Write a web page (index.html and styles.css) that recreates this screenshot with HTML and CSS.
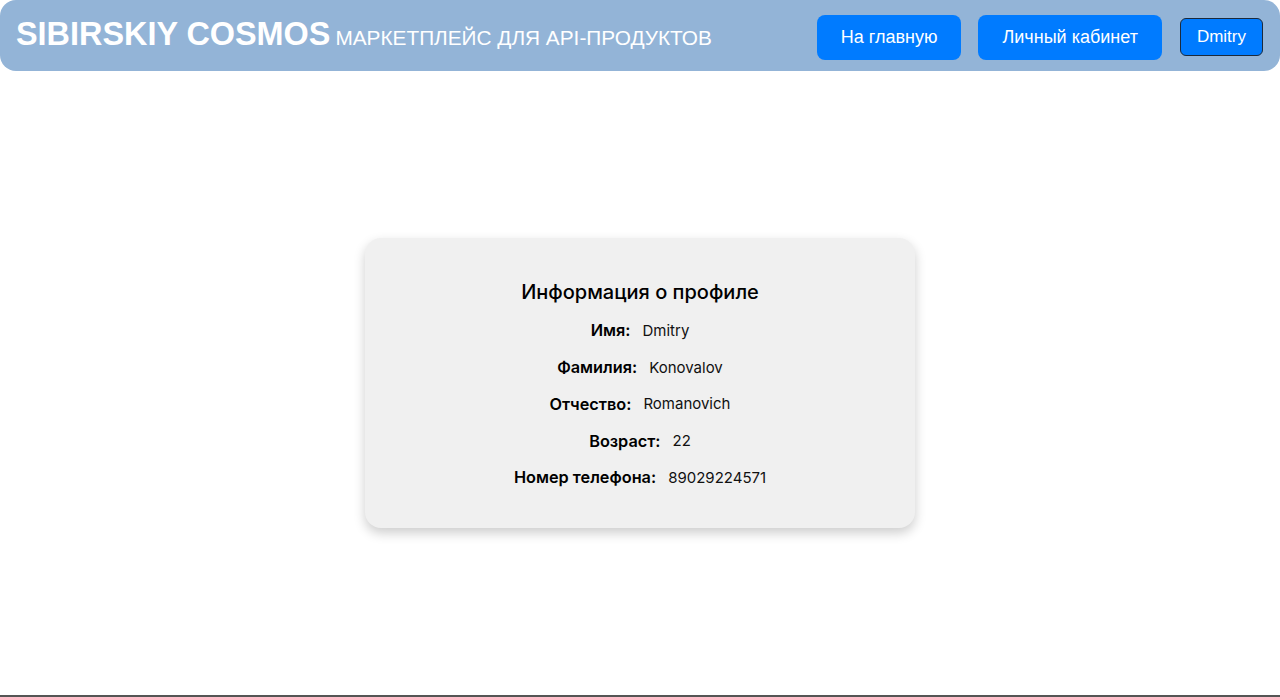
FILE: index.html
```html
<!DOCTYPE html>
<html lang="ru">
<head>
<meta charset="utf-8">
<title>Sibirskiy Cosmos</title>
<link rel="stylesheet" href="styles.css">
</head>
<body>
<header class="header">
  <div class="brand">
    <span class="logo">SIBIRSKIY COSMOS</span>
    <span class="tagline">Маркетплейс для API-продуктов</span>
  </div>
  <nav class="nav">
    <button class="btn">На главную</button>
    <button class="btn">Личный кабинет</button>
    <button class="btn btn-user">Dmitry</button>
  </nav>
</header>
<main class="main">
  <section class="card">
    <h2 class="card-title">Информация о профиле</h2>
    <div class="row"><span class="label">Имя:</span><span class="value">Dmitry</span></div>
    <div class="row"><span class="label">Фамилия:</span><span class="value">Konovalov</span></div>
    <div class="row"><span class="label">Отчество:</span><span class="value">Romanovich</span></div>
    <div class="row"><span class="label">Возраст:</span><span class="value">22</span></div>
    <div class="row"><span class="label">Номер телефона:</span><span class="value">89029224571</span></div>
  </section>
</main>
<footer class="footer"></footer>
</body>
</html>
```
FILE: styles.css
```css
* { box-sizing: border-box; }
html, body { margin: 0; padding: 0; background: #fff; }
body { font-family: "Liberation Sans", Arial, sans-serif; }

.header {
  height: 71px;
  background: #93b4d7;
  border-radius: 16px;
  display: flex;
  align-items: center;
  justify-content: space-between;
  padding: 0 17px 0 16px;
}
.brand { display: flex; align-items: baseline; gap: 5px; color: #fff; padding-bottom: 2px; }
.logo { font-size: 32.4px; font-weight: 700; }
.tagline { font-size: 20.8px; text-transform: uppercase; }

.nav { display: flex; align-items: center; gap: 17px; margin-top: 3px; }
.btn {
  font-family: "Liberation Sans", Arial, sans-serif;
  font-size: 18px;
  color: #fff;
  background: #007bff;
  border: none;
  border-radius: 8px;
  height: 45px;
  padding: 0 24px;
  cursor: pointer;
}
.btn-user {
  height: 38px;
  padding: 0 16px;
  border: 1px solid #1b2a3c;
  border-radius: 6px;
  font-size: 17px;
  margin-left: 1px;
}

.main {
  height: 624px;
  display: flex;
  align-items: center;
  justify-content: center;
}
.card {
  width: 550px;
  height: 290px;
  background: #f0f0f0;
  border-radius: 16px;
  box-shadow: 0 5px 12px rgba(0,0,0,0.2);
  padding: 42px 0 31px;
  font-family: Inter, "Noto Sans", sans-serif;
  color: #000;
  display: flex;
  flex-direction: column;
  align-items: center;
}
.card-title {
  margin: 0 0 8px;
  font-size: 20px;
  line-height: 24px;
  font-weight: 500;
}
.row {
  height: 36.75px;
  display: flex;
  align-items: center;
  gap: 12px;
}
.label { font-size: 16.3px; font-weight: 600; }
.value { font-size: 15px; font-weight: 400; color: #111; }

.footer { height: 2px; background: #555; }
```
